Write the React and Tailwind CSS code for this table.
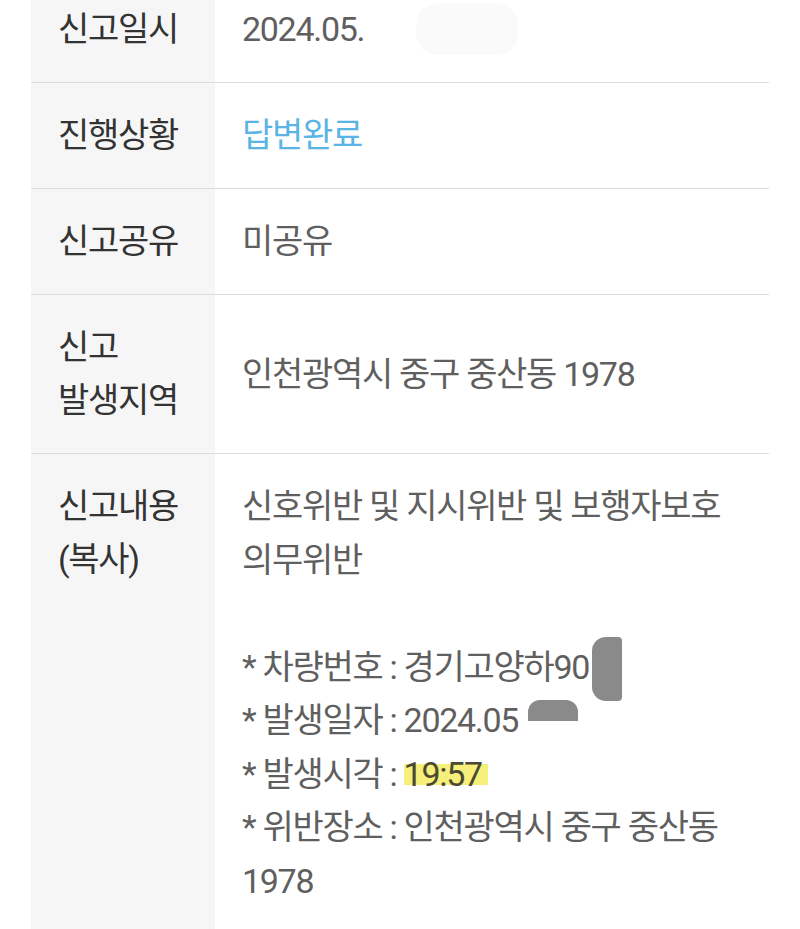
import React from "react";

const font = { fontFamily: "Roboto, 'Noto Sans CJK KR', sans-serif" };

function Row({ label, children, alignTop = false, last = false }) {
  return (
    <div className={`flex ${last ? "" : "border-b border-[#dcdcdc]"}`}>
      <div className="w-[184px] shrink-0 bg-[#f6f6f6] pl-[27px] py-[26px] text-[34px] leading-[53px] tracking-[-1.3px] text-[#333333]">
        {label}
      </div>
      <div className={`flex-1 pl-[27px] pr-[20px] py-[26px] flex ${alignTop ? "items-start" : "items-center"}`}>
        {children}
      </div>
    </div>
  );
}

export default function App() {
  return (
    <div className="h-[929px] bg-white overflow-hidden" style={font}>
      <div className="ml-[31px] w-[738px] -mt-[23px]">
        <Row label="신고일시">
          <div className="text-[34px] leading-[53px] tracking-[-1.3px] text-[#5f5f5f] flex items-center">
            2024.05.
            <span className="inline-block ml-[52px] w-[102px] h-[52px] rounded-[22px] bg-[#fafafa] -mt-[2px]" />
          </div>
        </Row>
        <Row label="진행상황">
          <div className="text-[34px] leading-[53px] tracking-[-1.3px] text-[#5ab4e6]">답변완료</div>
        </Row>
        <Row label="신고공유">
          <div className="text-[34px] leading-[53px] tracking-[-1.3px] text-[#5f5f5f]">미공유</div>
        </Row>
        <Row
          label={
            <>
              신고
              <br />
              발생지역
            </>
          }
        >
          <div className="text-[34px] leading-[53px] tracking-[-1.3px] text-[#5f5f5f]">인천광역시 중구 중산동 1978</div>
        </Row>
        <Row
          alignTop
          last
          label={
            <>
              신고내용
              <br />
              (복사)
            </>
          }
        >
          <div className="text-[34px] leading-[53.5px] tracking-[-1.3px] text-[#5f5f5f] pb-[40px]">
            <div>신호위반 및 지시위반 및 보행자보호</div>
            <div>의무위반</div>
            <div>&nbsp;</div>
            <div className="flex items-center h-[53.5px]">
              * 차량번호 : 경기고양하90
              <span className="inline-block w-[30px] h-[64px] bg-[#8a8a8a] rounded-l-[14px] rounded-r-[4px] ml-[3px] mt-[4px]" />
            </div>
            <div className="flex items-center h-[53.5px]">
              * 발생일자 : 2024.05
              <span className="inline-block w-[50px] h-[21px] bg-[#8a8a8a] rounded-t-[12px] ml-[10px] -mt-[20px]" />
            </div>
            <div>
              * 발생시각 :{" "}
              <span className="inline-block bg-[#f7ef7c] text-[#4a4a30] leading-[21px] pr-[6px]">19:57</span>
            </div>
            <div>* 위반장소 : 인천광역시 중구 중산동</div>
            <div>1978</div>
          </div>
        </Row>
      </div>
    </div>
  );
}
